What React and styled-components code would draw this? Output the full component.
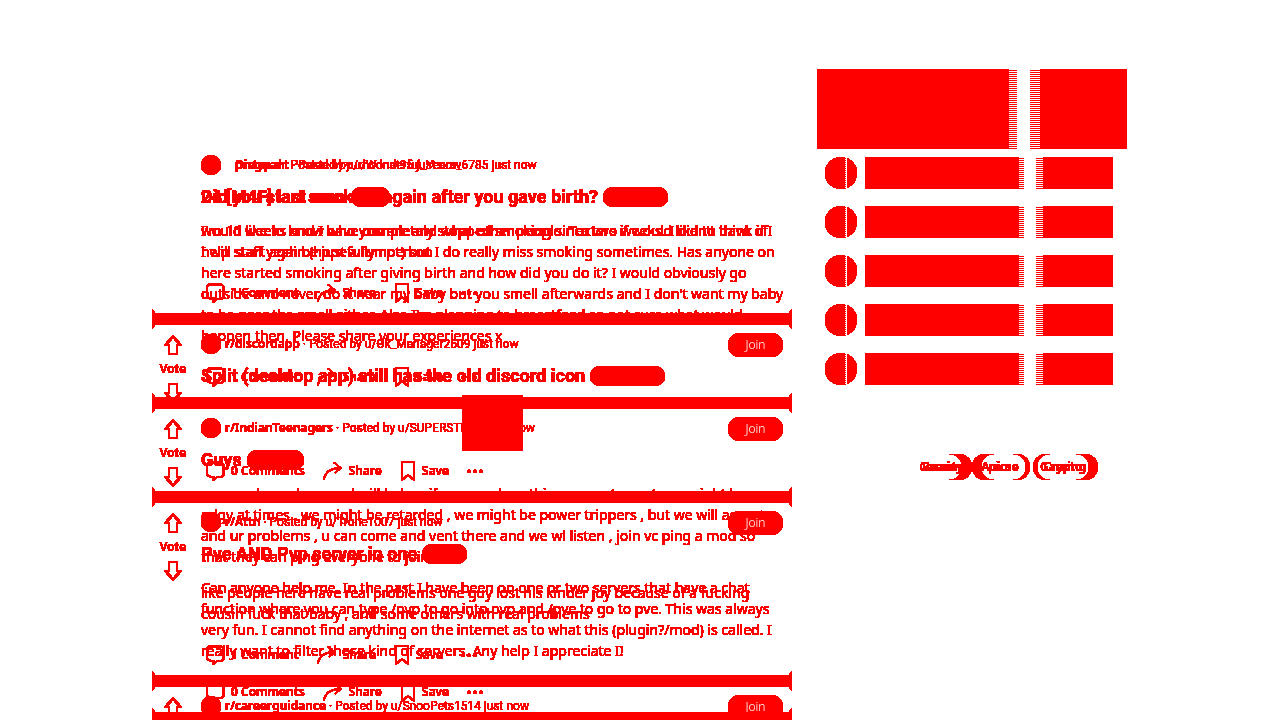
import React from "react";
import styled, { createGlobalStyle } from "styled-components";

const RED = "#ff0000";

const GlobalStyle = createGlobalStyle`
  * { box-sizing: border-box; }
  body {
    margin: 0;
    background: #ffffff;
    color: ${RED};
    font-family: "Noto Sans", "Open Sans", sans-serif;
  }
`;

const Page = styled.div`
  display: grid;
  grid-template-columns: minmax(0, 640px) 310px;
  column-gap: 25px;
  max-width: 976px;
  height: 100vh;
  margin: 0 auto;
  overflow: hidden;
  filter: url(#solid);
`;

const FilterDefs = styled.svg`
  position: absolute;
  width: 0;
  height: 0;
`;

const Feed = styled.main`
  display: grid;
  align-items: start;
  padding-top: 146px;
`;

const Layer = styled.div`
  grid-area: 1 / 1;
  min-width: 0;
`;

const Divider = styled.div`
  height: 20px;
  margin: -4px 0;
  background: ${RED};
  clip-path: polygon(
    0 0, 3px 4px, calc(100% - 3px) 4px, 100% 0,
    100% 100%, calc(100% - 3px) 16px, 3px 16px, 0 100%
  );
`;

const Card = styled.article`
  display: grid;
  grid-template-columns: 42px minmax(0, 1fr);
  column-gap: 7px;
  padding-right: 9px;
`;

const Votes = styled.div`
  display: flex;
  flex-direction: column;
  align-items: center;
  height: 0;
  padding-top: 10px;
  font-size: 12px;
  font-weight: 600;
  line-height: 16px;
`;

const VoteButton = styled.button`
  display: block;
  width: 18px;
  height: 20px;
  padding: 0;
  border: 0;
  background: none;
  color: inherit;
  svg { display: block; transform: ${(p) => (p.$down ? "scaleY(-1)" : "none")}; }
`;

const VoteLabel = styled.span`
  margin: 6px 0;
`;

const Content = styled.div`
  min-width: 0;
  padding-top: 8px;
`;

const Header = styled.header`
  display: flex;
  align-items: center;
  gap: 4px;
  height: 22px;
  font-family: Roboto, "Noto Sans", sans-serif;
  font-size: 12px;
  line-height: 16px;
  white-space: nowrap;
  b { font-family: "Noto Sans", sans-serif; font-weight: 600; }
`;

const Avatar = styled.span`
  flex: none;
  width: 20px;
  height: 20px;
  border-radius: 50%;
  background: ${RED};
`;

const Byline = styled.span`
  flex: 1;
  padding-left: ${(p) => (p.$indent ? "10px" : "0")};
`;

const JoinButton = styled.button`
  align-self: flex-start;
  width: 55px;
  height: 24px;
  padding: 0;
  border: 0;
  border-radius: 12px;
  background: ${RED};
  color: #ffffff;
  font: 300 12px/24px "Noto Sans", sans-serif;
`;

const Title = styled.h3`
  display: flex;
  align-items: center;
  gap: 5px;
  height: 20px;
  margin: 11px 0 0;
  font-family: Roboto, "Noto Sans", sans-serif;
  font-size: 18px;
  font-weight: 700;
  line-height: 20px;
  white-space: nowrap;
`;

const Flair = styled.span`
  width: ${(p) => p.$width}px;
  height: 20px;
  border-radius: 10px;
  background: ${RED};
`;

const Body = styled.div`
  padding: 13px 0 11px;
  font-size: 14px;
  line-height: 21px;
  white-space: nowrap;
  p { margin: 0; }
  p + p { margin-top: 15px; }
`;

const Media = styled.div`
  width: 61px;
  height: 56px;
  margin: 9px auto 0;
  background: ${RED};
`;

const Footer = styled.footer`
  display: flex;
  align-items: center;
  gap: 18px;
  height: 40px;
  padding-left: 4px;
`;

const Action = styled.button`
  display: flex;
  align-items: center;
  gap: 6px;
  padding: 0;
  border: 0;
  background: none;
  color: inherit;
  font: 600 12px/16px "Noto Sans", sans-serif;
  svg { display: block; }
`;

const Sidebar = styled.aside`
  padding-top: 69px;
`;

const stripes = (a, b, c, d) => `
  background-color: ${RED};
  background-image:
    linear-gradient(#fff, #fff),
    repeating-linear-gradient(#fff 0 1px, ${RED} 1px 2px);
  background-size: ${c - b}px 100%, ${d - a}px 100%;
  background-position: ${b}px 0, ${a}px 0;
  background-repeat: no-repeat;
`;

const Banner = styled.div`
  height: 80px;
  border-radius: 1px 1px 0 0;
  ${stripes(192, 200, 213, 223)}
`;

const Rows = styled.div`
  display: flex;
  flex-direction: column;
  gap: 17px;
  padding: 8px 14px 0 8px;
`;

const Row = styled.div`
  display: flex;
  gap: 8px;
`;

const Dot = styled.span`
  flex: none;
  width: 32px;
  height: 32px;
  border-radius: 50%;
  ${stripes(20, 21, 22, 22)}
`;

const Bar = styled.span`
  flex: 1;
  height: 32px;
  border-radius: 1px;
  ${stripes(154, 159, 171, 178)}
`;

const Topics = styled.div`
  display: grid;
  justify-items: end;
  margin-top: 69px;
  padding-right: 29px;
`;

const TopicEdges = styled.svg`
  grid-area: 1 / 1;
  display: block;
`;

const TopicList = styled.div`
  grid-area: 1 / 1;
  display: grid;
  grid-template-columns: 55px 60px 66px;
`;

const Topic = styled.button`
  display: grid;
  justify-items: center;
  align-items: center;
  height: 26px;
  padding: 0 4px 0 0;
  border: 0;
  background: none;
  color: inherit;
  font: 600 12px/16px "Noto Sans", sans-serif;
  span { grid-area: 1 / 1; }
`;

const Arrow = () => (
  <svg width="18" height="20" viewBox="0 0 18 20" fill="none" stroke="currentColor" strokeWidth="2">
    <path d="M9 1.5 16.5 10H13v9H5v-9H1.5Z" strokeLinejoin="round" />
  </svg>
);

const CommentIcon = () => (
  <svg width="20" height="20" viewBox="0 0 20 20" fill="none" stroke="currentColor" strokeWidth="1.6">
    <path d="M3.5 1.5h13l2 2v10q0 2-3 2.5h-3.5l-3.5 3v-3H6q-4-1-4-4v-8Z" />
  </svg>
);

const ShareIcon = () => (
  <svg width="20" height="20" viewBox="0 0 20 20" fill="none" stroke="currentColor" strokeWidth="1.4">
    <path d="M1 18.5C2 11 7 7 18 7M11 1.5 17.5 7 12 12" />
  </svg>
);

const SaveIcon = () => (
  <svg width="16" height="20" viewBox="0 0 16 20" fill="none" stroke="currentColor" strokeWidth="1.6">
    <path d="M2 1h12v18l-6-5-6 5Z" />
  </svg>
);

const DotsIcon = () => (
  <svg width="16" height="4" viewBox="0 0 16 4" fill="currentColor">
    <circle cx="2" cy="2" r="1.6" />
    <circle cx="8" cy="2" r="1.6" />
    <circle cx="14" cy="2" r="1.6" />
  </svg>
);

const before = [
  {
    quiet: true,
    community: "pregnant",
    by: "Posted by u/Wonderful_Years_6785 just now",
    title: "Did you start smoking again after you gave birth?",
    flair: 65,
    comments: "1 Comment",
    body: [[
      "I'm 10 weeks and I have completely stopped smoking since two weeks. I didn't think if I",
      "I will start again (hopefully not) but I do really miss smoking sometimes. Has anyone on",
      "here started smoking after giving birth and how did you do it? I would obviously go",
      "outside and never do it near my baby but you smell afterwards and I don't want my baby",
      "to be near the smell either. Also I'm planning to breastfeed so not sure what would",
      "happen then. Please share your experiences x",
    ]],
  },
  {
    community: "r/IndianTeenagers",
    by: "Posted by u/SUPERSTROM just now",
    title: "Guys",
    flair: 57,
    comments: "1 Comment",
    body: [
      [
        "we are always here and will help u if you need anything, come to vent, we might be",
        "edgy at times , we might be retarded , we might be power trippers , but we will accept",
        "and ur problems , u can come and vent there and we wl listen , join vc ping a mod so",
        "that they can ping everyone to join",
      ],
      [
        "like people here have real problems one guy lost his kinder joy because of a fucking",
        "cousin fuck that baby , and some others with real problems",
      ],
    ],
  },
  {
    community: "r/careerguidance",
    by: "Posted by u/SnooPets1514 just now",
    title: "",
    comments: "0 Comments",
  },
];

const after = [
  {
    quiet: true,
    community: "Dirtypal",
    by: "Posted by u/rhodnat95 just now",
    title: "24 [M4F] last smo",
    flair: 39,
    comments: "1 Comment",
    body: [[
      "would like to know who you are and what other people. Texters if would like to have of",
      "help staff yeah be just a fun person",
    ]],
  },
  {
    community: "r/discordapp",
    by: "Posted by u/Ok_Manager2609 just now",
    title: "Split (desktop app) still has the old discord icon",
    flair: 75,
    comments: "0 Comments",
    media: true,
  },
  {
    community: "r/Attn",
    by: "Posted by u/Trone1007 just now",
    title: "Pve AND Pvp server in one",
    flair: 45,
    comments: "0 Comments",
    body: [[
      "Can anyone help me. In the past I have been on one or two servers that have a chat",
      "function where you can type /pvp to go into pvp and /pve to go to pve. This was always",
      "very fun. I cannot find anything on the internet as to what this (plugin?/mod) is called. I",
      "really want to filter those kind of servers. Any help I appreciate I!",
    ]],
  },
];

function Post({ post }) {
  return (
    <Card>
      <Votes>
        {!post.quiet && (
          <>
            <VoteButton aria-label="Upvote"><Arrow /></VoteButton>
            <VoteLabel>Vote</VoteLabel>
            <VoteButton $down aria-label="Downvote"><Arrow /></VoteButton>
          </>
        )}
      </Votes>
      <Content>
        <Header>
          <Avatar />
          <Byline $indent={post.quiet}>
            <b>{post.community}</b> · {post.by}
          </Byline>
          {!post.quiet && <JoinButton>Join</JoinButton>}
        </Header>
        <Title>
          {post.title}
          {post.flair && <Flair $width={post.flair} />}
        </Title>
        {post.media && <Media />}
        {post.body && (
          <Body>
            {post.body.map((lines, i) => (
              <p key={i}>
                {lines.map((line) => (
                  <React.Fragment key={line}>{line}<br /></React.Fragment>
                ))}
              </p>
            ))}
          </Body>
        )}
        <Footer>
          <Action><CommentIcon />{post.comments}</Action>
          <Action><ShareIcon />Share</Action>
          <Action><SaveIcon />Save</Action>
          <Action aria-label="More"><DotsIcon /></Action>
        </Footer>
      </Content>
    </Card>
  );
}

const PostLayer = ({ posts }) => (
  <Layer>
    {posts.map((post) => (
      <React.Fragment key={post.community}>
        <Post post={post} />
        <Divider />
      </React.Fragment>
    ))}
  </Layer>
);

const ALPHA_STEPS = ["0", ...Array(39).fill("1")].join(" ");

export default function App() {
  return (
    <>
      <GlobalStyle />
      <FilterDefs aria-hidden="true">
        <filter id="solid" x="0" y="0" width="100%" height="100%" colorInterpolationFilters="sRGB">
          <feComponentTransfer>
            <feFuncA type="discrete" tableValues={ALPHA_STEPS} />
          </feComponentTransfer>
        </filter>
      </FilterDefs>
      <Page>
        <Feed>
          <PostLayer posts={before} />
          <PostLayer posts={after} />
        </Feed>
        <Sidebar>
          <Banner />
          <Rows>
            {[0, 1, 2, 3, 4].map((n) => (
              <Row key={n}><Dot /><Bar /></Row>
            ))}
          </Rows>
          <Topics>
            <TopicEdges width="181" height="26" viewBox="0 0 181 26" fill={RED}>
              <path d="M32 0H42A13 13 0 0 1 42 26H32A13 13 0 0 0 32 0Z" />
              <path d="M68 0H77A13 13 0 0 0 77 26H68A13 13 0 0 1 68 0Z" />
              <path d="M96 0H100A13 13 0 0 1 100 26H96A13 13 0 0 0 96 0Z" />
              <path d="M129 0H133A13 13 0 0 0 133 26H129A13 13 0 0 1 129 0Z" />
              <path d="M159 0H168A13 13 0 0 1 168 26H159A13 13 0 0 0 159 0Z" />
            </TopicEdges>
            <TopicList>
              <Topic><span>Gaming</span><span>Beauty</span></Topic>
              <Topic><span>pics</span><span>Anime</span></Topic>
              <Topic><span>Gaming</span><span>Crypto</span></Topic>
            </TopicList>
          </Topics>
        </Sidebar>
      </Page>
    </>
  );
}
